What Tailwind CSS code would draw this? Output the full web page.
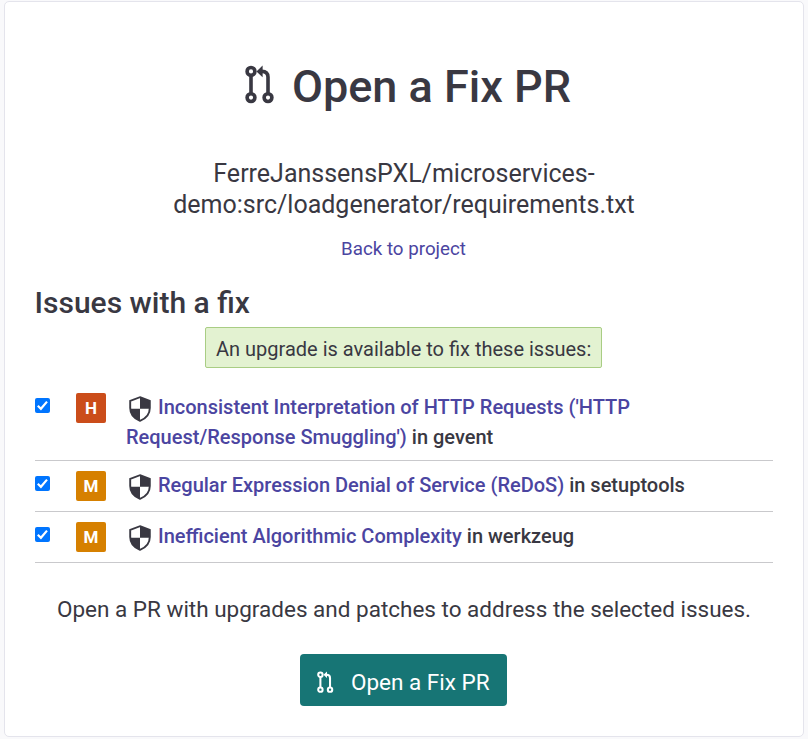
<!DOCTYPE html>
<html lang="en">
<head>
<meta charset="utf-8">
<title>Open a Fix PR</title>
<script src="https://cdn.jsdelivr.net/npm/@tailwindcss/browser@4"></script>
</head>
<body class="h-[739px] overflow-hidden bg-[#f9f9fb] pt-px pl-1 font-[Roboto,sans-serif] text-[#393842]">
<svg class="hidden">
  <symbol id="pr" viewBox="0 0 30 40">
    <g fill="none" stroke="currentColor" stroke-width="3.6">
      <circle cx="6" cy="6.4" r="3.9"/><circle cx="6" cy="32.6" r="3.9"/><circle cx="23" cy="32.6" r="3.9"/>
      <path d="M6 10V29M23 29V12Q23 6.4 17 6.4H15"/>
    </g>
    <path d="M11.5 6.4L17.6.6V12.2Z" fill="currentColor"/>
  </symbol>
  <symbol id="shield" viewBox="0 0 22 26">
    <path d="M11 1.2L20.8 4.8V12C20.8 18 17 22.5 11 24.8C5 22.5 1.2 18 1.2 12V4.8Z" fill="#fff"/>
    <path d="M11 1.2L20.8 4.8V12.8H11ZM11 12.8V24.8C5.3 22.5 1.5 18.5 1.2 12.8Z" fill="currentColor"/>
    <path d="M11 1.2L20.8 4.8V12C20.8 18 17 22.5 11 24.8C5 22.5 1.2 18 1.2 12V4.8Z" fill="none" stroke="currentColor" stroke-width="1.9"/>
  </symbol>
  <symbol id="check" viewBox="0 0 15 15">
    <rect width="15" height="15" rx="2" fill="#0075ff"/>
    <path d="M2.8 7.8L5.9 10.8L12 3.6" fill="none" stroke="#fff" stroke-width="2.2"/>
  </symbol>
</svg>
<main class="flex h-[736px] w-[800px] flex-col rounded-[5px] border border-[#e4e4ec] bg-white px-[30px]">
  <h1 class="mt-[55px] flex h-[60px] items-center justify-center pl-2 text-[45px] leading-[60px] font-medium">
    <svg class="mr-[17px] mb-[4px] h-10 w-[30px]"><use href="#pr"/></svg><span>Open a Fix PR</span>
  </h1>
  <p class="mt-[41px] text-center text-[25px] leading-[31px]">FerreJanssensPXL/microservices-<br>demo:src/loadgenerator/requirements.txt</p>
  <a class="mt-[14px] mr-px text-center text-[18.75px] leading-[30px] text-[#4b45a1]">Back to project</a>
  <h2 class="mt-[20px] -ml-[0.5px] text-[30px] leading-[38px] font-medium">Issues with a fix</h2>
  <div class="mt-[5px] mr-px h-[41px] w-[397px] self-center rounded-[2px] border border-[#a9cd84] bg-[#e3f2d1] px-[10px] text-[20px] leading-[42px] whitespace-nowrap">An upgrade is available to fix these issues:</div>
  <ul class="mt-[15px] text-[20px] leading-[30px] font-medium">
    <li class="flex border-b border-[#c9c9cc]">
      <svg class="mt-[15px] size-[15px]"><use href="#check"/></svg>
      <span class="mt-[10px] mb-[10px] ml-[26px] size-[30px] rounded-[2px] bg-[#cb4d1a] text-center text-[17px] leading-[31px] font-bold text-white">H</span>
      <p class="ml-5 pt-[9px] pb-2"><svg class="mr-[7px] ml-[3px] inline h-[26px] w-[22px] align-[-7.5px]"><use href="#shield"/></svg><span class="text-[#4b45a1]">Inconsistent Interpretation of HTTP Requests ('HTTP<br>Request/Response Smuggling')</span> in gevent</p>
    </li>
    <li class="flex h-[51px] border-b border-[#c9c9cc]">
      <svg class="mt-[15px] size-[15px]"><use href="#check"/></svg>
      <span class="mt-[10px] ml-[26px] size-[30px] rounded-[2px] bg-[#d68000] text-center text-[17px] leading-[31px] font-bold text-white">M</span>
      <p class="ml-5 pt-[9px]"><svg class="mr-[7px] ml-[3px] inline h-[26px] w-[22px] align-[-7.5px]"><use href="#shield"/></svg><span class="text-[#4b45a1]">Regular Expression Denial of Service (ReDoS)</span> in setuptools</p>
    </li>
    <li class="flex h-[51px] border-b border-[#c9c9cc]">
      <svg class="mt-[15px] size-[15px]"><use href="#check"/></svg>
      <span class="mt-[10px] ml-[26px] size-[30px] rounded-[2px] bg-[#d68000] text-center text-[17px] leading-[31px] font-bold text-white">M</span>
      <p class="ml-5 pt-[9px]"><svg class="mr-[7px] ml-[3px] inline h-[26px] w-[22px] align-[-7.5px]"><use href="#shield"/></svg><span class="text-[#4b45a1]">Inefficient Algorithmic Complexity</span> in werkzeug</p>
    </li>
  </ul>
  <p class="mt-[31px] text-center text-[22.5px] leading-[30px]">Open a PR with upgrades and patches to address the selected issues.</p>
  <button class="mt-[30px] mr-px flex h-[52px] w-[207px] items-center self-center rounded-[4px] bg-[#177575] pl-[17px] text-[22.5px] text-white">
    <svg class="mt-[4px] mr-[17px] h-[23px] w-[17px]"><use href="#pr"/></svg><span class="mt-[5px]">Open a Fix PR</span>
  </button>
</main>
</body>
</html>
